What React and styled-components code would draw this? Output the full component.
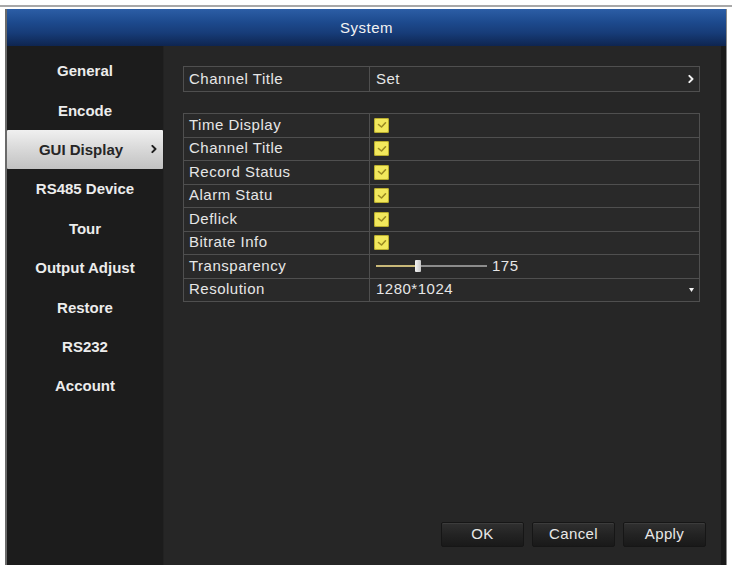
import React from "react"
import styled, { createGlobalStyle } from "styled-components"

const GlobalStyle = createGlobalStyle`
  body {
    margin: 0;
    background: #ffffff;
    font-family: "Liberation Sans", Arial, sans-serif;
  }
`

const Page = styled.div`
  width: 732px;
  height: 565px;
  overflow: hidden;
  display: flex;
  flex-direction: column;
`

const TopRule = styled.div`
  height: 2px;
  margin: 5px 0 2px 0;
  background: #a8a8a8;
`

const Frame = styled.div`
  flex: 1;
  margin: 0 5px 0 5px;
  display: flex;
  flex-direction: column;
  background: #1d1d1d;
  border-left: 2px solid #6a6a6a;
  border-right: 1px solid #8a8a8a;
`

const Header = styled.div`
  height: 37px;
  display: flex;
  align-items: center;
  justify-content: center;
  background: linear-gradient(
    to bottom,
    #2c5ea6 0%,
    #1d4a8e 35%,
    #173c78 65%,
    #0e2550 100%
  );
  color: #f2f2f2;
  font-size: 15px;
  letter-spacing: 0.5px;
`

const Body = styled.div`
  flex: 1;
  display: flex;
`

const Sidebar = styled.ul`
  width: 156px;
  margin: 0;
  padding: 5px 0 0 0;
  list-style: none;
  background: #1c1c1c;
`

const MenuItem = styled.li`
  position: relative;
  height: 39.4px;
  display: flex;
  align-items: center;
  justify-content: center;
  padding-right: ${props => (props.active ? "8px" : "0")};
  font-size: 15px;
  font-weight: bold;
  color: ${props => (props.active ? "#262626" : "#ececec")};
  background: ${props =>
    props.active
      ? "linear-gradient(to bottom, #f0f0f0 0%, #d8d8d8 50%, #c2c2c2 100%)"
      : "transparent"};
  border-radius: ${props => (props.active ? "1px" : "0")};
`

const MenuArrow = styled.span`
  position: absolute;
  right: 6px;
  top: 50%;
  transform: translateY(-50%);
  display: flex;
`

const Content = styled.div`
  flex: 1;
  display: flex;
  flex-direction: column;
  padding: 20px 21px 0 19px;
  background: #262626;
  border-left: 1px solid #222;
  border-right: 5px solid #1a1a1a;
`

const Table = styled.div`
  border: 1px solid #4f4f4f;
  background: #292929;
  margin-bottom: ${props => props.gap || "0"};
`

const Row = styled.div`
  display: grid;
  grid-template-columns: 185px 1fr;
  height: ${props => props.h || "22.5px"};
  & + & {
    border-top: 1px solid #4f4f4f;
  }
`

const Label = styled.div`
  display: flex;
  align-items: center;
  padding-left: 5px;
  padding-bottom: 2px;
  color: #e6e6e6;
  font-size: 15px;
  letter-spacing: 0.5px;
  white-space: nowrap;
`

const Value = styled(Label)`
  position: relative;
  padding-left: 6px;
  border-left: 1px solid #4f4f4f;
`

const ValueArrow = styled.span`
  position: absolute;
  right: 5px;
  top: 50%;
  transform: translateY(-50%);
  display: flex;
`

const Check = styled.span`
  width: 15px;
  height: 15px;
  margin-top: 2px;
  margin-left: -2px;
  border-radius: 2px;
  background: #f2e85c;
  box-shadow: 0 0 0 1px #b9ad2c inset;
  display: flex;
  align-items: center;
  justify-content: center;
`

const Slider = styled.div`
  display: flex;
  align-items: center;
  width: 111px;
  height: 14px;
  margin-top: 2px;
`

const Track = styled.div`
  height: 2px;
  background: ${props => (props.filled ? "#c8b878" : "#8c8c8c")};
  flex: ${props => props.grow};
`

const Thumb = styled.div`
  width: 6px;
  height: 12px;
  background: linear-gradient(to right, #f4f4f4, #c8c8c8);
  border-radius: 1px;
`

const SliderValue = styled.span`
  margin-left: 5px;
`

const Footer = styled.div`
  margin-top: auto;
  margin-right: -6px;
  padding-bottom: 18px;
  display: flex;
  justify-content: flex-end;
  gap: 8px;
`

const Button = styled.button`
  width: 83px;
  height: 25px;
  padding: 0 0 2px 0;
  border: 1px solid #161616;
  border-radius: 2px;
  background: linear-gradient(to bottom, #303030 0%, #232323 50%, #191919 100%);
  box-shadow: inset 0 1px 0 #3c3c3c;
  color: #e8e8e8;
  font-family: "Liberation Sans", Arial, sans-serif;
  font-size: 15px;
  letter-spacing: 0.4px;
`

const Chevron = ({ color = "#f0f0f0", size = 9 }) => (
  <svg width={size * 0.7} height={size} viewBox="0 0 7 10">
    <path
      d="M1.5 1.5 L5 5 L1.5 8.5"
      fill="none"
      stroke={color}
      strokeWidth="2.2"
      strokeLinecap="round"
      strokeLinejoin="round"
    />
  </svg>
)

const Tick = () => (
  <svg width="10" height="8" viewBox="0 0 10 8">
    <path
      d="M1.5 3.5 L4.5 6 L8.5 1.8"
      fill="none"
      stroke="#9a8a22"
      strokeWidth="1.6"
      strokeLinecap="round"
      strokeLinejoin="round"
    />
  </svg>
)

const DropMark = () => (
  <svg width="5" height="4" viewBox="0 0 5 4">
    <path d="M0 0 L5 0 L2.5 4 Z" fill="#f4f4f4" />
  </svg>
)

const menu = [
  "General",
  "Encode",
  "GUI Display",
  "RS485 Device",
  "Tour",
  "Output Adjust",
  "Restore",
  "RS232",
  "Account",
]

const toggles = [
  "Time Display",
  "Channel Title",
  "Record Status",
  "Alarm Statu",
  "Deflick",
  "Bitrate Info",
]

export default function App() {
  const transparency = 175
  const fill = (transparency - 128) / 127

  return (
    <React.Fragment>
      <GlobalStyle />
      <Page>
        <TopRule />
        <Frame>
          <Header>System</Header>
          <Body>
            <Sidebar>
              {menu.map(item => (
                <MenuItem key={item} active={item === "GUI Display"}>
                  {item}
                  {item === "GUI Display" ? (
                    <MenuArrow>
                      <Chevron color="#1e1e1e" />
                    </MenuArrow>
                  ) : null}
                </MenuItem>
              ))}
            </Sidebar>
            <Content>
              <Table gap="21px">
                <Row h="24px">
                  <Label>Channel Title</Label>
                  <Value>
                    Set
                    <ValueArrow>
                      <Chevron />
                    </ValueArrow>
                  </Value>
                </Row>
              </Table>

              <Table>
                {toggles.map(name => (
                  <Row key={name}>
                    <Label>{name}</Label>
                    <Value>
                      <Check>
                        <Tick />
                      </Check>
                    </Value>
                  </Row>
                ))}
                <Row>
                  <Label>Transparency</Label>
                  <Value>
                    <Slider>
                      <Track filled grow={fill} />
                      <Thumb />
                      <Track grow={1 - fill} />
                    </Slider>
                    <SliderValue>{transparency}</SliderValue>
                  </Value>
                </Row>
                <Row>
                  <Label>Resolution</Label>
                  <Value>
                    1280*1024
                    <ValueArrow>
                      <DropMark />
                    </ValueArrow>
                  </Value>
                </Row>
              </Table>

              <Footer>
                <Button>OK</Button>
                <Button>Cancel</Button>
                <Button>Apply</Button>
              </Footer>
            </Content>
          </Body>
        </Frame>
      </Page>
    </React.Fragment>
  )
}
